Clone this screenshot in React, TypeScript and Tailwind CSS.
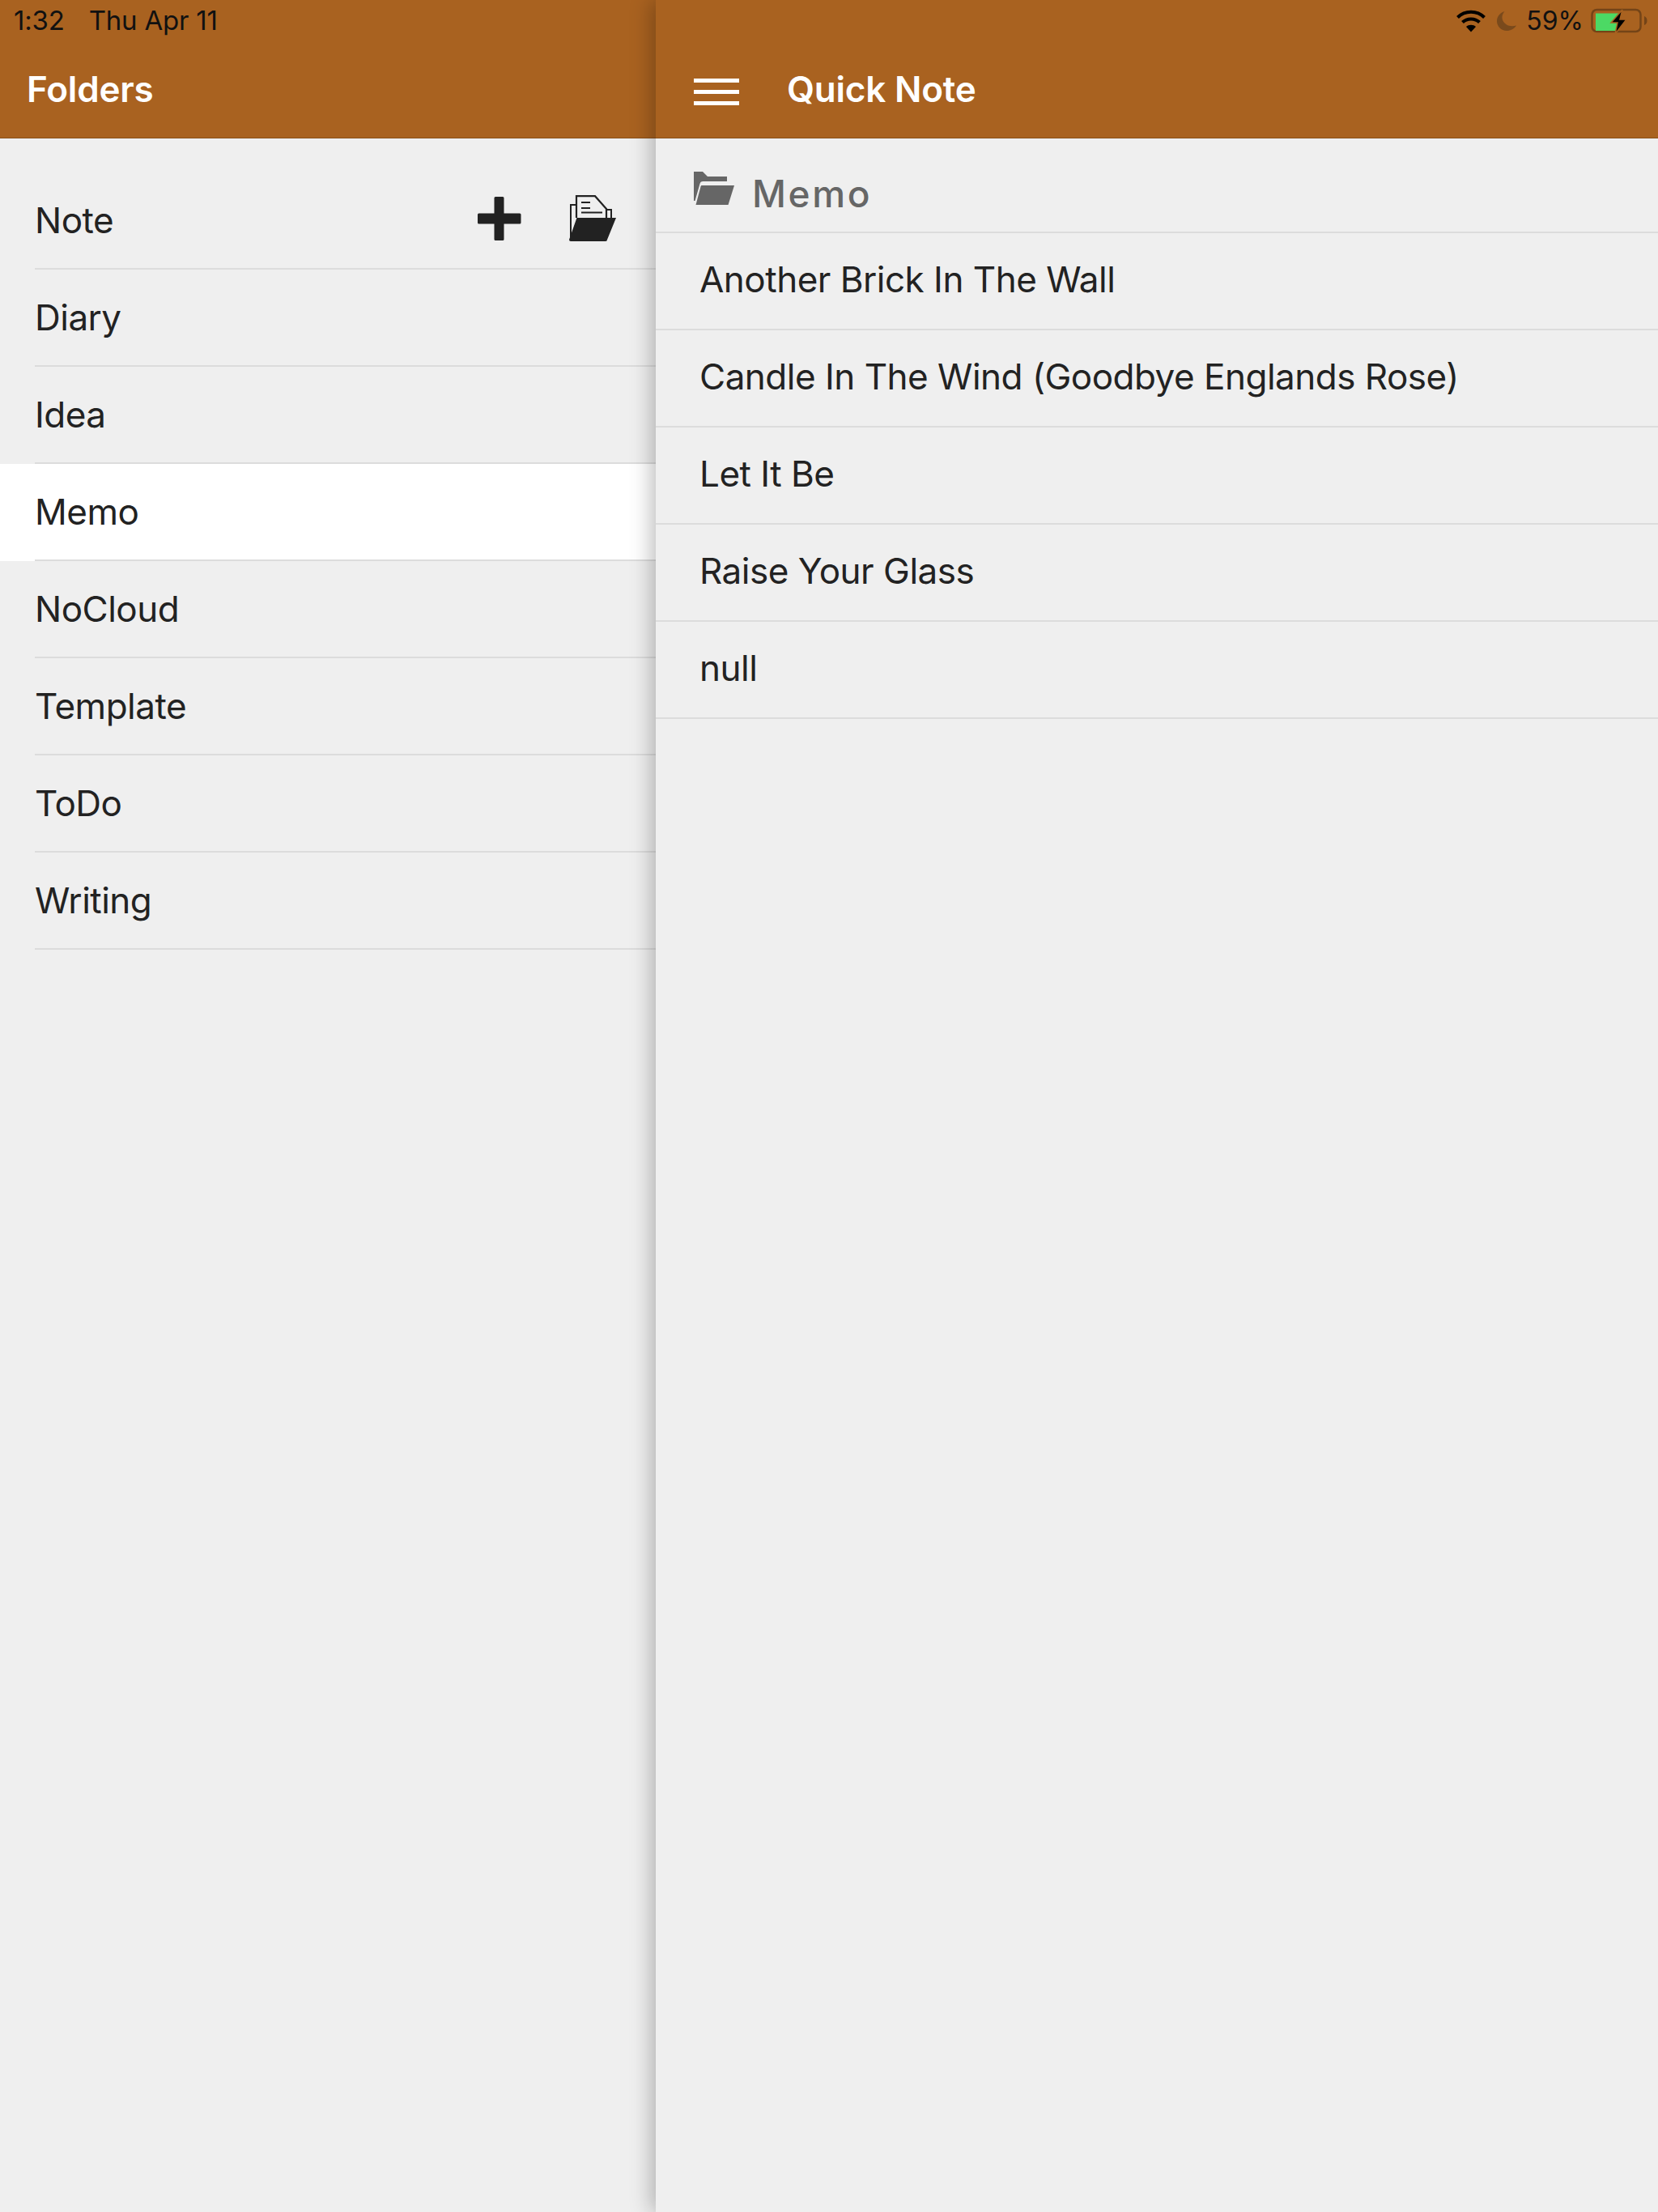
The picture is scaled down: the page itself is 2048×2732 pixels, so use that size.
const folders = ["Note", "Diary", "Idea", "Memo", "NoCloud", "Template", "ToDo", "Writing"];
const notes = ["Another Brick In The Wall", "Candle In The Wind (Goodbye Englands Rose)", "Let It Be", "Raise Your Glass", "null"];

function Plus() {
  return (
    <svg width="54" height="54" viewBox="0 0 54 54" fill="#222222">
      <path d="M22 0h9a1.500 1.500 0 0 1 1.500 1.500V20.500H52A1.500 1.500 0 0 1 53.500 22v10a1.500 1.500 0 0 1-1.500 1.500H32.500V52.500A1.500 1.500 0 0 1 31 54h-9a1.500 1.500 0 0 1-1.500-1.500V33.500H1.500A1.500 1.500 0 0 1 0 32V22a1.500 1.500 0 0 1 1.500-1.500H20.500V1.500A1.500 1.500 0 0 1 22 0z" />
    </svg>
  );
}

function FolderFile() {
  return (
    <svg width="58" height="58" viewBox="0 0 58 58" fill="none">
      <path d="M9 12H2v42" stroke="#222222" strokeWidth="2" />
      <path d="M9 28V1.200h23L46 17v11" stroke="#222222" strokeWidth="2.200" fill="#efefef" />
      <path d="M46 18h6v10" stroke="#222222" strokeWidth="2" />
      <path d="M15 9h11M15 16h11M15 21.500h26" stroke="#222222" strokeWidth="2" />
      <path d="M9.500 28H58L47 55a2 2 0 0 1-2 2H2a2 2 0 0 1-2-2z" fill="#222222" />
    </svg>
  );
}

function OpenFolder() {
  return (
    <svg width="50" height="41" viewBox="0 0 50 41" fill="#666666">
      <path d="M0 0h11l6 6h24v6H11.500C9 12 8 13 7.500 15L1.500 36H0z" />
      <path d="M10 17h40L42.500 41H2.500L8.500 18.500C8.800 17.500 9 17 10 17z" />
    </svg>
  );
}

function Wifi() {
  return (
    <svg width="36" height="28" viewBox="0 0 36 28" fill="none" stroke="#000000" strokeWidth="4">
      <path d="M1.500 9.500C10.500 .5 25.500 .5 34.500 9.500" />
      <path d="M7.500 15.500C13 10 23 10 28.500 15.500" />
      <path d="M18 27.500 12 21C15 18 21 18 24 21z" fill="#000000" stroke="none" />
    </svg>
  );
}

function Moon() {
  return (
    <svg width="24" height="24" viewBox="0 0 24 24" fill="#7a4a1c">
      <path d="M9.500 0C5 5 6 11 9.500 14.500 13.500 18.500 19 19 24 17.500 21.500 21.500 17 24 12 24 5.500 24 0 18.500 0 12 0 6.500 4 1.500 9.500 0z" />
    </svg>
  );
}

function Battery() {
  return (
    <svg width="70" height="32" viewBox="0 0 70 32" fill="none">
      <rect x="1.500" y="2" width="60" height="27" rx="6" stroke="#744417" strokeWidth="2.500" />
      <path d="M66 10c2.500 1 3.500 3 3.500 5.500S68.500 20 66 21z" fill="#744417" />
      <path d="M6 6.500h32l-6 21.500H6z" fill="#4cd964" />
      <path d="M39 2 25 18h8l-3 14 14-18h-8z" fill="#000000" stroke="#a96220" strokeWidth="1.500" />
    </svg>
  );
}

export default function App() {
  return (
    <div className="flex h-[2732px] w-[2048px] overflow-hidden bg-[#efefef] text-[#222222] font-['Inter',sans-serif]">
      <div className="w-[810px] shrink-0">
        <header className="h-[171px] bg-[#a96220] border-b border-b-[#8a4f18]">
          <div className="flex h-[50px] items-center gap-[30px] pl-[17px] pt-[2px] text-[33px] tracking-[-0.2px] text-[#111111]">
            <span>1:32</span>
            <span>Thu Apr 11</span>
          </div>
          <div className="flex h-[120px] items-start pl-[33px] pt-[30px] text-[44px] font-semibold leading-[61px] tracking-[-0.2px] text-white">Folders</div>
        </header>
        <ul className="pt-[42px]">
          {folders.map((name) => (
            <li key={name} className={name === "Memo" ? "bg-white" : ""}>
              <div className="ml-[43px] flex h-[120px] items-center justify-between border-b-2 border-b-[#dcdcdc] text-[44px] tracking-[-0.5px]">
                <span>{name}</span>
                {name === "Note" && (
                  <div className="mr-[49px] flex items-center gap-[59px] pb-[4px]">
                    <Plus />
                    <FolderFile />
                  </div>
                )}
              </div>
            </li>
          ))}
        </ul>
      </div>
      <div className="relative z-10 flex-1 shadow-[-6px_0_24px_rgba(0,0,0,0.25)]">
        <header className="h-[171px] bg-[#a96220] border-b border-b-[#8a4f18]">
          <div className="flex h-[50px] items-center justify-end pr-[13px] pt-[2px] text-[32px] text-[#111111]">
            <Wifi />
            <div className="ml-[14px]"><Moon /></div>
            <span className="ml-[12px] mr-[9px]">59%</span>
            <Battery />
          </div>
          <div className="flex h-[120px] items-start pl-[47px] pt-[30px]">
            <div className="flex w-[56px] flex-col gap-[9px] pt-[17px]">
              <div className="h-[5px] bg-white" />
              <div className="h-[5px] bg-white" />
              <div className="h-[5px] bg-white" />
            </div>
            <span className="ml-[59px] text-[44px] font-semibold leading-[61px] tracking-[-0.2px] text-white">Quick Note</span>
          </div>
        </header>
        <div className="flex h-[117px] items-start border-b-2 border-b-[#dcdcdc] pl-[47px] pt-[41px] text-[#666666]">
          <OpenFolder />
          <span className="ml-[22px] -mt-[1px] text-[46px] font-medium leading-[56px] tracking-[2.600px]">Memo</span>
        </div>
        <ul>
          {notes.map((n) => (
            <li key={n} className="flex h-[120px] items-center border-b-2 border-b-[#dcdcdc] pb-[5px] pl-[54px] text-[44px] tracking-[-0.5px]">{n}</li>
          ))}
        </ul>
      </div>
    </div>
  );
}
